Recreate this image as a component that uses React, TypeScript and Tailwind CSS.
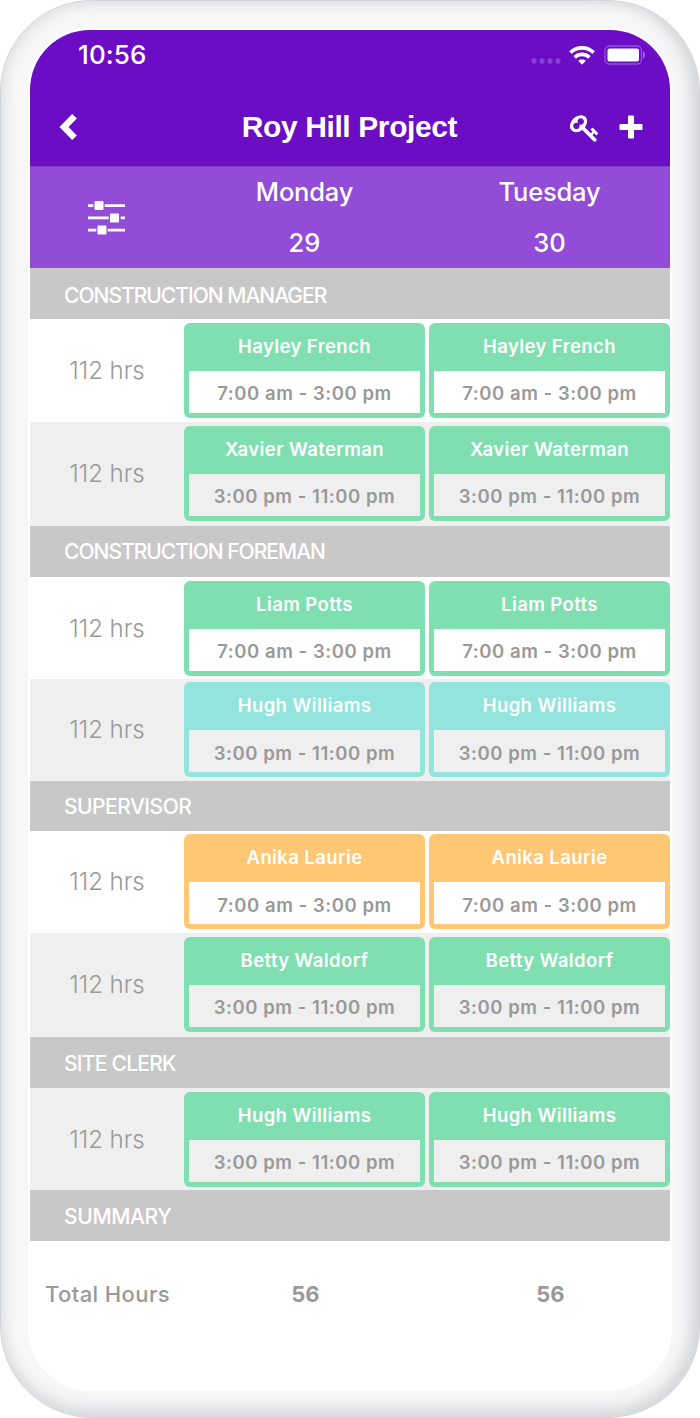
import type { ReactNode } from "react";

type Shift = {
  name: string;
  time: string;
  tone: "green" | "teal" | "orange";
  shaded: boolean;
  layout: string;
};

type Section = {
  title: string;
  layout: string;
  shifts: Shift[];
};

const tones = {
  green: "bg-[#80dfb1]",
  teal: "bg-[#92e4dc]",
  orange: "bg-[#ffc774]",
};

const MORNING = "7:00 am - 3:00 pm";
const EVENING = "3:00 pm - 11:00 pm";

const sections: Section[] = [
  {
    title: "CONSTRUCTION MANAGER",
    layout: "h-[51px] pt-[5px] tracking-[-1px]",
    shifts: [
      { name: "Hayley French", time: MORNING, tone: "green", shaded: false, layout: "h-[103px] pt-[3.5px]" },
      { name: "Xavier Waterman", time: EVENING, tone: "green", shaded: true, layout: "h-[104px] pt-[3.5px]" },
    ],
  },
  {
    title: "CONSTRUCTION FOREMAN",
    layout: "h-[51px] pt-px tracking-[-1px]",
    shifts: [
      { name: "Liam Potts", time: MORNING, tone: "green", shaded: false, layout: "h-[102px] pt-[3.5px]" },
      { name: "Hugh Williams", time: EVENING, tone: "teal", shaded: true, layout: "h-[102px] pt-[3px]" },
    ],
  },
  {
    title: "SUPERVISOR",
    layout: "h-[50px] pt-[2px] tracking-[-0.5px]",
    shifts: [
      { name: "Anika Laurie", time: MORNING, tone: "orange", shaded: false, layout: "h-[102px] pt-[3px]" },
      { name: "Betty Waldorf", time: EVENING, tone: "green", shaded: true, layout: "h-[104px] pt-[3.5px]" },
    ],
  },
  {
    title: "SITE CLERK",
    layout: "h-[51px] pt-[3px] tracking-[-0.75px]",
    shifts: [
      { name: "Hugh Williams", time: EVENING, tone: "green", shaded: true, layout: "h-[102px] pt-[3.5px]" },
    ],
  },
  { title: "SUMMARY", layout: "h-[51px] pt-[3px] tracking-[-0.35px]", shifts: [] },
];

const StatusBar = () => (
  <div className="flex h-[50px] items-center justify-between pl-12 pr-6">
    <span className="text-[26px] font-medium leading-none tracking-[0.1px]">10:56</span>
    <div className="flex items-center">
      <svg width="30" height="6" viewBox="0 0 30 6" className="mr-2 mt-3" fill="#8a3fd1">
        <circle cx="3" cy="3" r="2.7" />
        <circle cx="11" cy="3" r="2.7" />
        <circle cx="19" cy="3" r="2.7" />
        <circle cx="27" cy="3" r="2.7" />
      </svg>
      <svg width="26" height="19" viewBox="0 0 26 19" fill="none" stroke="#fff" strokeWidth="3.7">
        <path d="M1.400 6.600C8 .4 18 .4 24.600 6.600" />
        <path d="M5.600 11.300C9.900 7.400 16.100 7.400 20.400 11.300" />
        <path d="M13 18.800l-3.800-4c2-1.900 5.600-1.900 7.600 0z" fill="#fff" stroke="none" />
      </svg>
      <svg width="42" height="20" viewBox="0 0 42 20" className="ml-[9px]">
        <rect x="1" y="1" width="36.500" height="18" rx="4.500" fill="none" stroke="#9450d8" strokeWidth="1.300" />
        <rect x="3.500" y="3.500" width="31.500" height="13" rx="2" fill="#fff" />
        <path d="M39 6.500c2.800.8 2.800 6.200 0 7z" fill="#9c5cdb" />
      </svg>
    </div>
  </div>
);

const TitleBar = () => (
  <div className="flex h-[86px] items-center justify-between pl-[29px] pr-[27px] pt-[8px]">
    <svg width="20" height="28" viewBox="0 0 20 28" fill="none" stroke="#fff" strokeWidth="6.500">
      <path d="M15.500 3.200L5 14 15.500 24.800" />
    </svg>
    <h1 className="pl-[50px] font-['Liberation_Sans',sans-serif] text-[30px] font-bold leading-none tracking-[-0.4px]">
      Roy Hill Project
    </h1>
    <div className="flex items-center gap-[19px]">
      <svg width="30" height="30" viewBox="0 0 1792 1792" fill="#fff" className="mt-[2px]">
        <path d="M832 512q0-80-56-136t-136-56-136 56-56 136q0 42 19 83-41-19-83-19-80 0-136 56t-56 136 56 136 136 56 136-56 56-136q0-42-19-83 41 19 83 19 80 0 136-56t56-136zm851 704q0 17-49 66t-66 49q-9 0-28.500-16t-36.500-33-38.500-40-24.500-26l-96 96 220 220q28 28 28 68 0 42-39 81t-81 39q-40 0-68-28l-671-671q-176 131-365 131-163 0-265.500-102.500t-102.500-265.500q0-160 95-313t248-248 313-95q163 0 265.500 102.500t102.500 265.500q0 189-131 365l355 355 96-96q-3-3-26-24.500t-40-38.500-33-36.500-16-28.500q0-17 49-66t66-49q13 0 23 10 6 6 46 44.500t82 79.500 86.500 86 73 78 28.500 41z" />
      </svg>
      <svg width="24" height="24" viewBox="0 0 24 24" fill="#fff">
        <path d="M10 .5h4a1 1 0 011 1V9h7.500a1 1 0 011 1v4a1 1 0 01-1 1H15v7.500a1 1 0 01-1 1h-4a1 1 0 01-1-1V15H1.500a1 1 0 01-1-1v-4a1 1 0 011-1H9V1.500a1 1 0 011-1z" />
      </svg>
    </div>
  </div>
);

const DayColumn = ({ day, date }: { day: string; date: string }) => (
  <div className="flex w-[245px] shrink-0 flex-col items-center gap-[25px] pt-3 text-[25.5px] font-medium leading-[26px]">
    <span className="tracking-[-0.2px]">{day}</span>
    <span>{date}</span>
  </div>
);

const DaysHeader = () => (
  <div className="flex h-[102px] overflow-hidden border-t border-[#8041bf] bg-[#924cd7] text-white">
    <div className="flex w-[152px] shrink-0 items-center justify-center">
      <svg width="37" height="36" viewBox="0 0 37 36" fill="#fff">
        <path d="M0 4.300h37V7H0zM0 16.500h37v2.700H0zM0 28.700h37v2.700H0z" />
        <path fill="#924cd7" d="M5.300 0h11.400v11H5.300zM20.700 12h12v12h-12zM8.300 24h11.400v12H8.300z" />
        <rect x="6.500" y="1.100" width="9" height="9" rx="1" />
        <rect x="22" y="13.400" width="9" height="9" rx="1" />
        <rect x="9.500" y="25.500" width="9" height="9" rx="1" />
      </svg>
    </div>
    <DayColumn day="Monday" date="29" />
    <DayColumn day="Tuesday" date="30" />
  </div>
);

const ShiftCard = ({ shift }: { shift: Shift }) => (
  <div className={`flex h-[95px] w-[241px] shrink-0 flex-col rounded-[6px] px-[5px] pb-[5px] ${tones[shift.tone]}`}>
    <div className="flex h-12 items-center justify-center whitespace-nowrap text-[18.5px] font-semibold tracking-[0.4px] text-white">
      {shift.name}
    </div>
    <div
      className={`flex flex-1 items-center justify-center whitespace-nowrap pt-[5px] text-[18.5px] font-semibold tracking-[0.55px] text-[#999] ${
        shift.shaded ? "bg-[#efefef]" : "bg-white"
      }`}
    >
      {shift.time}
    </div>
  </div>
);

const ShiftRow = ({ shift }: { shift: Shift }) => (
  <div className={`flex items-start overflow-hidden ${shift.layout} ${shift.shaded ? "bg-[#efefef]" : "bg-white"}`}>
    <div className="flex h-[96px] w-[154px] shrink-0 items-center justify-center text-[24px] font-light text-[#999]">
      112 hrs
    </div>
    <div className="flex gap-1">
      <ShiftCard shift={shift} />
      <ShiftCard shift={shift} />
    </div>
  </div>
);

const SectionTitle = ({ section }: { section: Section }) => (
  <div className={`flex items-center bg-[#c8c8c8] pl-[34px] text-[21px] font-medium text-white ${section.layout}`}>
    {section.title}
  </div>
);

const Phone = ({ children }: { children: ReactNode }) => (
  <div className="h-[1418px] w-[700px] overflow-hidden bg-white font-['Inter',sans-serif]">
    <div className="h-[1418px] rounded-[92px] border border-[#d2d3d6] bg-[#f7f7f8] px-[27px] pt-[27px] shadow-[inset_0_-12px_16px_-4px_#d6d8da,inset_-12px_0_16px_-4px_#d3d5d8,inset_6px_6px_14px_-4px_#e2e2e3]">
      <div className="h-[1363px] overflow-hidden rounded-[62px] bg-white px-[2px] pt-[2px]">
        <div className="overflow-hidden rounded-t-[60px]">{children}</div>
      </div>
    </div>
  </div>
);

export default function App() {
  return (
    <Phone>
      <header className="bg-[#6b0dc5] text-white">
        <StatusBar />
        <TitleBar />
      </header>
      <DaysHeader />
      {sections.map((section) => (
        <section key={section.title}>
          <SectionTitle section={section} />
          {section.shifts.map((shift) => (
            <ShiftRow key={shift.name} shift={shift} />
          ))}
        </section>
      ))}
      <div className="flex h-[106px] items-center overflow-hidden text-[22px] text-[#999]">
        <span className="w-[153px] shrink-0 whitespace-nowrap pl-[15px] font-medium tracking-[0.4px]">Total Hours</span>
        <span className="w-[245px] shrink-0 text-center font-bold">56</span>
        <span className="w-[245px] shrink-0 text-center font-bold">56</span>
      </div>
    </Phone>
  );
}
